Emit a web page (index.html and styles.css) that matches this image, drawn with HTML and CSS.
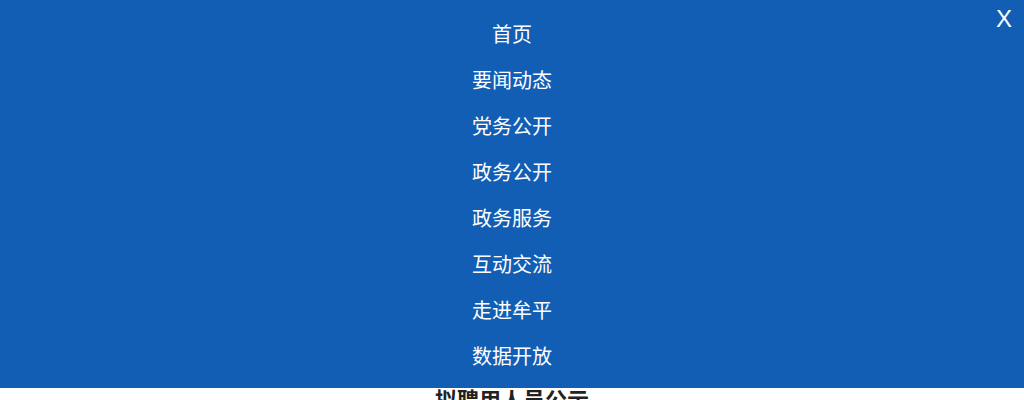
FILE: index.html
```html
<!DOCTYPE html>
<html lang="zh-CN">
<head>
<meta charset="utf-8">
<title>牟平</title>
<link rel="stylesheet" href="styles.css">
</head>
<body>
<main class="page">
  <h2 class="notice-title">拟聘用人员公示</h2>
</main>
<nav class="menu-overlay">
  <span class="menu-close">X</span>
  <ul class="menu-list">
    <li class="menu-item">首页</li>
    <li class="menu-item">要闻动态</li>
    <li class="menu-item">党务公开</li>
    <li class="menu-item">政务公开</li>
    <li class="menu-item">政务服务</li>
    <li class="menu-item">互动交流</li>
    <li class="menu-item">走进牟平</li>
    <li class="menu-item">数据开放</li>
  </ul>
</nav>
</body>
</html>
```
FILE: styles.css
```css
html, body {
  margin: 0;
  padding: 0;
  background: #ffffff;
  font-family: "Noto Sans CJK SC", "Liberation Sans", sans-serif;
}
.page {
  padding-top: 383px;
}
.notice-title {
  margin: 0;
  text-align: center;
  font-size: 22px;
  line-height: 30px;
  font-weight: bold;
  color: #222222;
}
.menu-overlay {
  position: fixed;
  top: 0;
  left: 0;
  right: 0;
  height: 388px;
  box-sizing: border-box;
  padding: 11px 0 9px;
  background: #115eb4;
}
.menu-close {
  position: absolute;
  top: 4px;
  right: 12px;
  font-family: "Liberation Sans", sans-serif;
  font-size: 24px;
  line-height: 30px;
  color: #ffffff;
}
.menu-list {
  list-style: none;
  margin: 0;
  padding: 0;
}
.menu-item {
  height: 46px;
  line-height: 46px;
  text-align: center;
  font-size: 20px;
  color: #ffffff;
}
```
